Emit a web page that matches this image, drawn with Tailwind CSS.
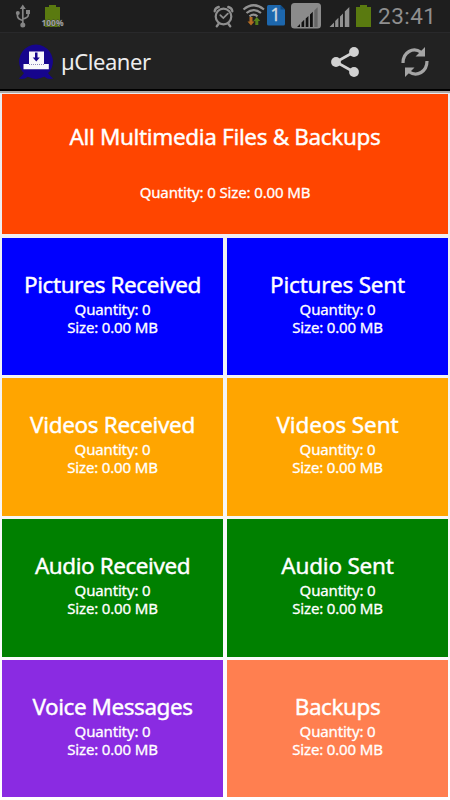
<!DOCTYPE html>
<html lang="en">
<head>
<meta charset="utf-8">
<title>µCleaner</title>
<script src="https://cdn.jsdelivr.net/npm/@tailwindcss/browser@4"></script>
</head>
<body class="w-[450px] h-[800px] overflow-hidden bg-linear-to-b from-[#e8e8ee] to-white font-['Noto_Sans',sans-serif] text-white">
<header class="h-[93px] bg-[#222222] border-b-2 border-[#aaa9a5]">
  <div class="h-8 bg-[#1e1e1e]">
    <svg class="block" width="450" height="32" viewBox="0 0 450 32" fill="none">
      <g stroke="#858585" stroke-width="1.7">
        <path d="M22.8 7v18M17.500 12v4q0 3 5.300 4.500M28.300 11v4q0 2.500-5.500 4"/>
        <g fill="#858585" stroke="none"><path d="M22.800 4.500l3 4.500h-6z"/><circle cx="17.800" cy="13" r="2"/><path d="M26 10h4v4h-4z"/><circle cx="22.800" cy="25" r="2.500"/></g>
      </g>
      <path d="M45 7h4V5h7v2h4v20H45z" fill="#5a7a10"/>
      <text x="41.500" y="26" font-size="9" font-weight="700" textLength="22" lengthAdjust="spacingAndGlyphs" fill="#a0a0a0" stroke="#333" stroke-width=".8" paint-order="stroke">100%</text>
      <g stroke="#8f8f8f" stroke-linecap="round">
        <circle cx="223.500" cy="16.500" r="7.800" stroke-width="2.200"/>
        <path d="M214.700 11.200q.5-3.500 4-4.200M232.300 11.200q-.5-3.500-4-4.200M218.500 24l-1.700 2.200M228.500 24l1.700 2.200" stroke-width="2.400"/>
        <path d="M220.300 15.200l3 2.900 4.500-4.400" stroke-width="1.800"/>
      </g>
      <g stroke="#929292" stroke-width="2.200">
        <path d="M243.500 9.500q10-8.500 20.500 0M246.500 13q7-5.800 14.500 0M249.500 16.300q4-3.200 8 0"/>
      </g>
      <path d="M249.500 17h3v4.500h2l-3.500 4-3.500-4h2z" fill="#b36b22"/>
      <path d="M255.300 25h3v-4h2l-3.500-4-3.500 4h2z" fill="#55811b"/>
      <path d="M268.500 5h12l4.500 4.500V24q0 1.500-1.500 1.500h-15q-1.500 0-1.500-1.500V6.500q0-1.500 1.500-1.500z" fill="#1d67ad"/>
      <path d="M280.500 5l4.500 4.500h-4.500z" fill="#114b83"/>
      <text x="275.500" y="21" font-size="18" font-family="Noto Sans" text-anchor="middle" fill="#d2d8df" stroke="#d2d8df" stroke-width=".3">1</text>
      <rect x="291" y="3" width="30" height="25.500" rx="3.500" fill="#8b8b8b"/>
      <path d="M297 27l3-3V27zM301.500 22.500l2.700-2.700V27h-2.700zM305.700 18.500l2.700-2.500V27h-2.700zM310 14.500l2.800-2.800V27H310z" fill="#111"/>
      <path d="M314.300 10.500l3.300-3.300V27h-3.300z" fill="#666"/>
      <path d="M329.500 27l4.500-4.500V27zM335.200 21l3.200-3.200V27h-3.200zM340 16.500l3-3V27h-3zM344.800 11.500l4.500-4.500V27h-4.500z" fill="#929292"/>
      <path d="M356 7h4V5h7v2h4v20h-15z" fill="#5a7a10"/>
      <text x="378" y="23.500" font-size="22.500" font-family="Roboto" textLength="58" fill="#8f8f8f">23:41</text>
    </svg>
  </div>
  <div class="h-[59px] flex items-center border-t border-[#29292b] border-b-2 border-b-black">
    <svg class="ml-[18px] mt-[1px] shrink-0" width="36" height="36" viewBox="0 0 36 36">
      <path d="M18 .5A17 17 0 0 0 2 23Q4 28 6 29 4 32 .8 34.500q5 1.500 9-1.700 8 4.200 16.500 0 4 3.200 9 1.700Q32 32 30 29q2-1 4-6A17 17 0 0 0 18 .5z" fill="#16058d"/>
      <path d="M11 7.500h15V20h4.800v5.300H5.500V20H11z" fill="#f7f7fb"/>
      <path d="M17 8.500h2.500v5h2.300l-3.500 4-3.600-4H17z" fill="#16058d"/>
      <path d="M11 20.500h15" stroke="#7067aa" stroke-width=".8" stroke-dasharray="1 1"/>
    </svg>
    <div class="ml-[7px] text-[22px] leading-[30px] text-[#ededed] tracking-[-0.45px]">µCleaner</div>
    <svg class="ml-auto mt-[2px]" width="30" height="32" viewBox="0 0 30 32">
      <path d="M24 6L6 16l18 10" fill="none" stroke="#d2d2d2" stroke-width="2.700"/>
      <g fill="#d2d2d2"><circle cx="24" cy="6" r="4.900"/><circle cx="6" cy="16" r="4.900"/><circle cx="24" cy="26" r="4.900"/></g>
    </svg>
    <svg class="ml-[40px] mr-[20px] mt-[2px]" width="30" height="32" viewBox="0 0 30 32">
      <g fill="none" stroke="#a5a5a5" stroke-width="3.200"><path d="M3 17Q3 9 9 5.500q6-3.500 12 .7"/><path d="M27 15q0 8-6 11.500-6 3.500-12-.7"/></g>
      <path d="M25 1v9.500h-9.500z M5 31v-9.500h9.500z" fill="#a5a5a5"/>
    </svg>
  </div>
</header>
<main class="px-[2px] pt-px flex flex-col gap-[3.500px]">
  <section class="h-[140px] bg-[#ff4500] text-center pt-[28px]">
    <h2 class="text-[22.500px] leading-[30px] tracking-[-0.34px] [-webkit-text-stroke:0.4px_white]">All Multimedia Files &amp; Backups</h2>
    <p class="mt-[31px] text-[15px] leading-[18px] tracking-[-0.13px] [-webkit-text-stroke:0.3px_white]">Quantity: 0 Size: 0.00 MB</p>
  </section>
  <div class="grid grid-cols-2 gap-x-1 gap-y-[3.300px] auto-rows-[137.500px] text-center [&_h2]:text-[22.500px] [&_h2]:leading-[30px] [&_h2]:[-webkit-text-stroke:0.4px_white] [&_p]:text-[15px] [&_p]:leading-[18px] [&_p]:tracking-[-0.15px] [&_p]:[-webkit-text-stroke:0.3px_white]">
    <section class="bg-[#0000ff] pt-[32px]"><h2 class="tracking-[-0.44px]">Pictures Received</h2><p>Quantity: 0<br>Size: 0.00 MB</p></section>
    <section class="bg-[#0000ff] pt-[32px]"><h2 class="tracking-[-0.2px]">Pictures Sent</h2><p>Quantity: 0<br>Size: 0.00 MB</p></section>
    <section class="bg-[#ffa500] pt-[32px]"><h2 class="tracking-[-0.34px]">Videos Received</h2><p>Quantity: 0<br>Size: 0.00 MB</p></section>
    <section class="bg-[#ffa500] pt-[32px]"><h2 class="tracking-[-0.1px]">Videos Sent</h2><p>Quantity: 0<br>Size: 0.00 MB</p></section>
    <section class="bg-[#008000] pt-[32px]"><h2 class="tracking-[-0.44px]">Audio Received</h2><p>Quantity: 0<br>Size: 0.00 MB</p></section>
    <section class="bg-[#008000] pt-[32px]"><h2 class="tracking-[-0.2px]">Audio Sent</h2><p>Quantity: 0<br>Size: 0.00 MB</p></section>
    <section class="bg-[#8a2be2] pt-[32px]"><h2 class="tracking-[-0.44px]">Voice Messages</h2><p>Quantity: 0<br>Size: 0.00 MB</p></section>
    <section class="bg-[#ff7f50] pt-[32px]"><h2 class="tracking-[-0.44px]">Backups</h2><p>Quantity: 0<br>Size: 0.00 MB</p></section>
  </div>
</main>
</body>
</html>
